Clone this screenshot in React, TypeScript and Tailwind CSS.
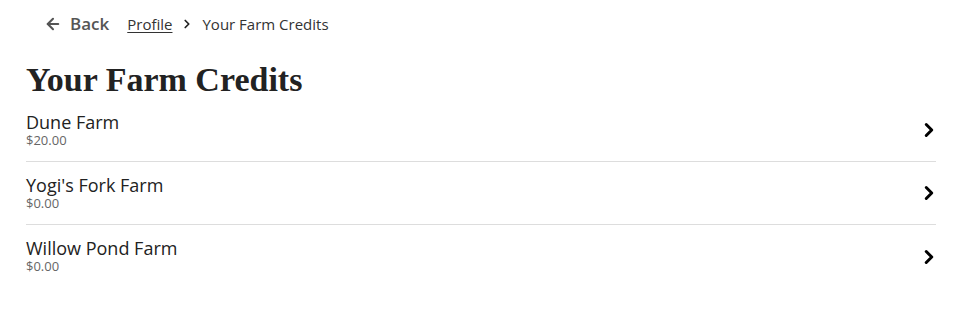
import { ArrowLeft, ChevronRight } from "lucide-react";

const credits = [
  { name: "Dune Farm", amount: "$20.00" },
  { name: "Yogi's Fork Farm", amount: "$0.00" },
  { name: "Willow Pond Farm", amount: "$0.00" },
];

export default function App() {
  return (
    <div className="min-h-screen bg-white pl-[26px] pr-[31px] text-[#222] font-['Open_Sans',sans-serif]">
      <nav className="flex items-center h-[48px] pl-[18px]">
        <button className="flex items-center gap-[8px] text-[17px] font-semibold text-[#555]">
          <ArrowLeft className="w-[18px] h-[18px]" strokeWidth={2.75} />
          Back
        </button>
        <a className="ml-[18px] text-[15px] text-[#333] underline underline-offset-2">Profile</a>
        <ChevronRight className="mx-[8px] w-[14px] h-[14px] text-[#222]" strokeWidth={3} />
        <span className="text-[15px] text-[#333]">Your Farm Credits</span>
      </nav>

      <h1 className="mt-[14px] text-[34px] leading-[36px] font-bold text-[#222] font-['Liberation_Serif',serif]">
        Your Farm Credits
      </h1>

      <ul className="mt-[1px]">
        {credits.map((c, i) => (
          <li
            key={c.name}
            className={`flex items-center justify-between h-[63px] ${i < credits.length - 1 ? "border-b border-[#ddd]" : ""}`}
          >
            <div className="flex flex-col">
              <span className="text-[18px] leading-[20px] text-[#222]">{c.name}</span>
              <span className="text-[13px] leading-[17px] text-[#666]">{c.amount}</span>
            </div>
            <ChevronRight className="w-[22px] h-[22px] text-black -mr-[4px]" strokeWidth={3.25} />
          </li>
        ))}
      </ul>
    </div>
  );
}
